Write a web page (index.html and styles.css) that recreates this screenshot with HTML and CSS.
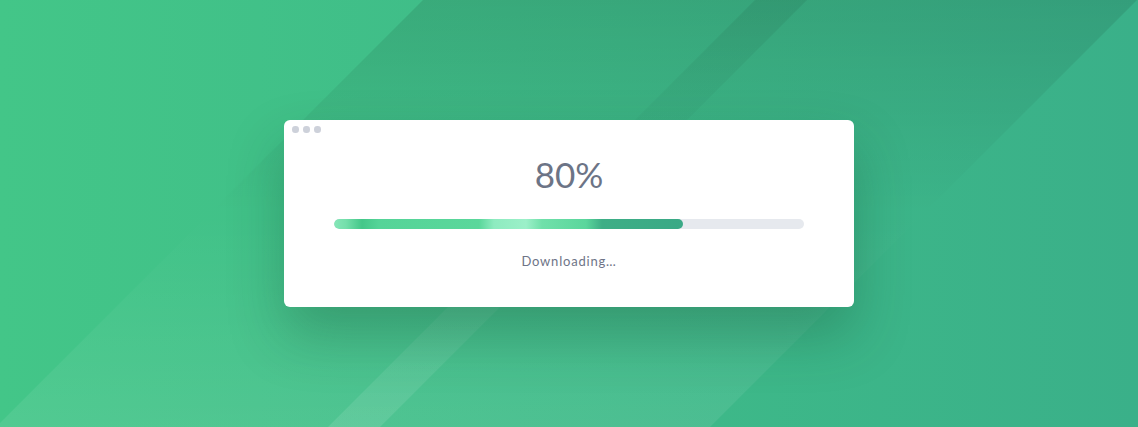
FILE: index.html
```html
<!DOCTYPE html>
<html lang="en">
<head>
  <meta charset="UTF-8">
  <meta name="viewport" content="width=device-width, initial-scale=1.0">
  <title>Downloading</title>
  <link rel="stylesheet" href="styles.css">
</head>
<body>
  <div class="scene">
    <div class="window">
      <div class="window-dots">
        <span class="dot"></span>
        <span class="dot"></span>
        <span class="dot"></span>
      </div>
      <div class="percent">80%</div>
      <div class="progress">
        <div class="progress-fill" style="width: 74.3%;"></div>
      </div>
      <div class="status">Downloading…</div>
    </div>
  </div>
</body>
</html>
```

FILE: styles.css
```css
html, body {
  margin: 0;
  height: 100%;
}
body {
  font-family: Lato, "Liberation Sans", sans-serif;
  overflow: hidden;
}
.scene {
  position: relative;
  height: 427px;
  display: flex;
  justify-content: center;
  align-items: center;
  background: linear-gradient(to right, #43c688, #3ab089);
  overflow: hidden;
}
/* wide diagonal band across the middle */
.scene::before {
  content: "";
  position: absolute;
  inset: 0;
  background: linear-gradient(to bottom, rgba(0, 0, 0, 0.1), rgba(0, 0, 0, 0) 50%, rgba(255, 255, 255, 0.08));
  clip-path: polygon(423px 0, 1137px 0, 710px 427px, -4px 427px);
}
/* narrow stripe inside the band */
.scene::after {
  content: "";
  position: absolute;
  inset: 0;
  background: linear-gradient(to bottom, rgba(0, 0, 0, 0.07), rgba(0, 0, 0, 0) 45%, rgba(255, 255, 255, 0.1));
  clip-path: polygon(755px 0, 807px 0, 380px 427px, 328px 427px);
}
.window {
  position: relative;
  z-index: 1;
  width: 570px;
  height: 187px;
  box-sizing: border-box;
  background: #fff;
  border-radius: 6px;
  box-shadow: 0 28px 55px rgba(15, 60, 40, 0.28);
  padding: 6px 0 0;
}
.window-dots {
  display: flex;
  gap: 4.5px;
  padding-left: 8px;
  height: 7px;
}
.dot {
  width: 6.5px;
  height: 6.5px;
  border-radius: 50%;
  background: #cdd1da;
}
.percent {
  margin-top: 21px;
  text-align: center;
  font-size: 35px;
  line-height: 40px;
  color: #6c7486;
}
.progress {
  margin: 25px auto 0;
  width: 470px;
  height: 10px;
  border-radius: 5px;
  background: #e6e9ee;
  overflow: hidden;
}
.progress-fill {
  height: 100%;
  border-radius: 5px;
  background: linear-gradient(to right,
    #86e6b8 0px,
    #74dfab 12px,
    #44c789 28px,
    #55d498 45px,
    #5ad79b 145px,
    #8eebc0 160px,
    #9cf0c9 192px,
    #70e0aa 208px,
    #5ad69c 252px,
    #3eae86 268px,
    #3aa986 349px);
}
.status {
  margin-top: 23px;
  text-align: center;
  font-size: 13px;
  line-height: 18px;
  letter-spacing: 0.8px;
  color: #6e7487;
}
```
